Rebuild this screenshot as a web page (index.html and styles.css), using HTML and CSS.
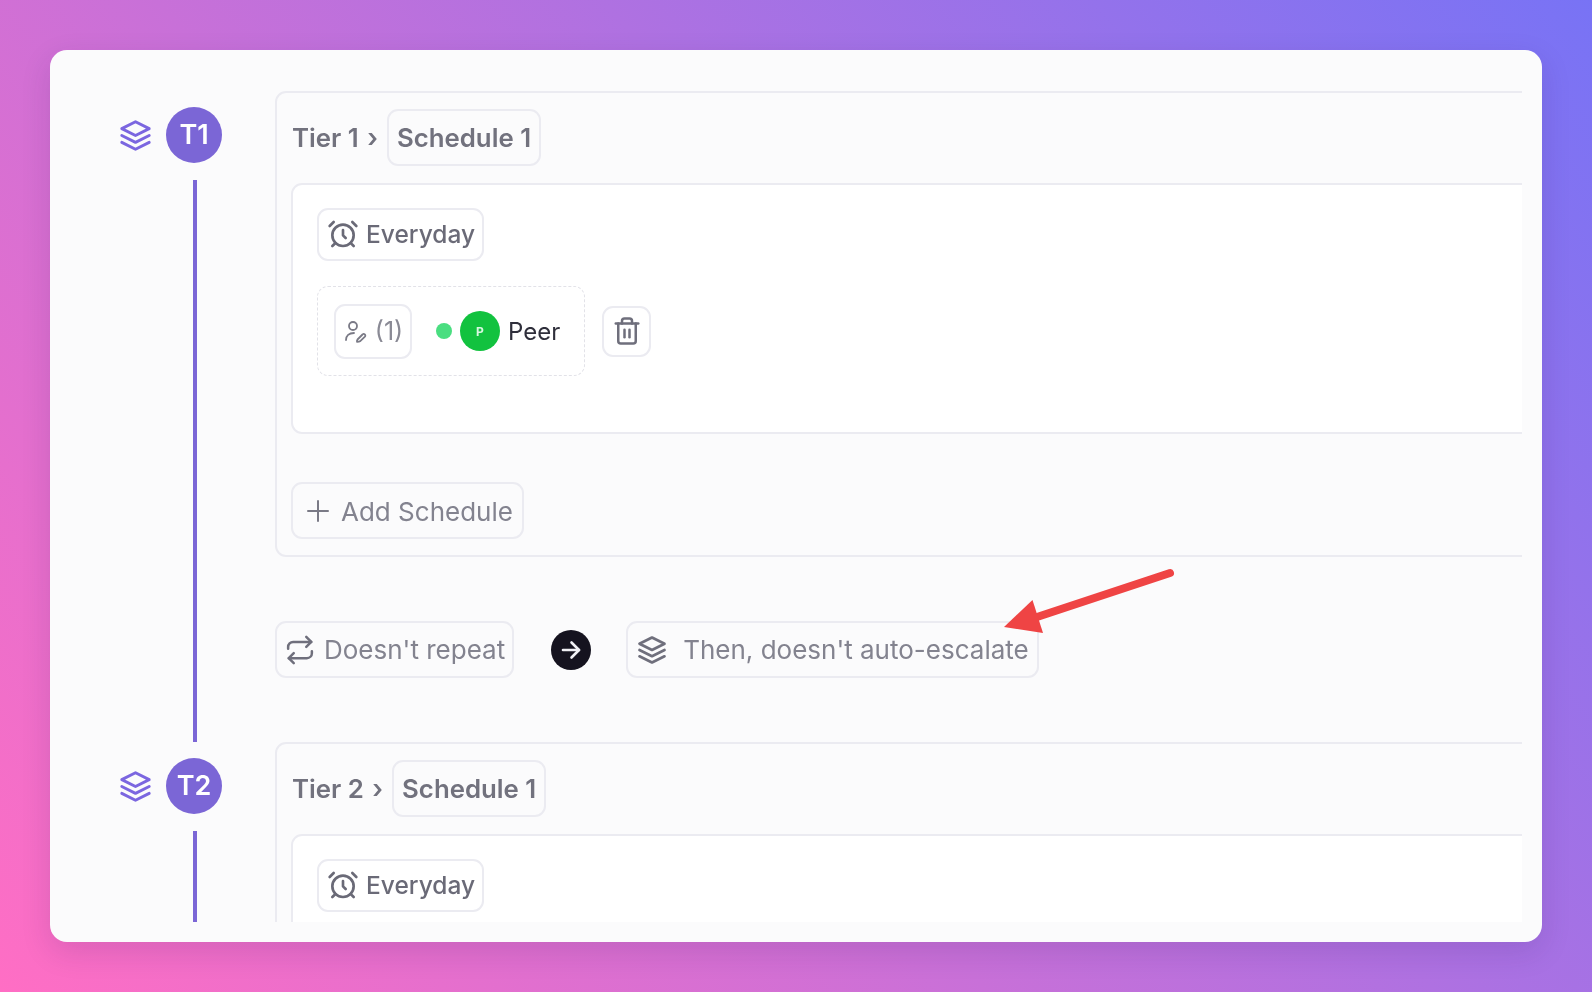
FILE: index.html
```html
<!DOCTYPE html>
<html lang="en">
<head>
<meta charset="utf-8">
<title>Escalation policy</title>
<link rel="stylesheet" href="styles.css">
</head>
<body>
<svg class="defs" width="0" height="0" aria-hidden="true">
  <symbol id="i-layers" viewBox="0 0 24 24"><path d="M12 2.600 2.600 7.300 12 12l9.400-4.700z"/><path d="M2.600 12 12 16.700l9.400-4.700"/><path d="M2.600 16.700 12 21.400l9.400-4.700"/></symbol>
  <symbol id="i-alarm" viewBox="0 0 24 24"><circle cx="12" cy="13" r="8"/><path d="M12 9v4l2 2"/><path d="M5 3 2 6"/><path d="m22 6-3-3"/><path d="M6.380 18.700 4 21"/><path d="M17.640 18.670 20 21"/></symbol>
  <symbol id="i-userpen" viewBox="0 0 24 24"><circle cx="10" cy="7" r="4"/><path d="M3 21c0-4 3-7 8-7"/><path d="m14.500 20.500 5-5a1.600 1.600 0 0 1 2.400 2.200l-4.900 4.600c-.8.500-3 .6-3 .6s-.2-1.600.5-2.400z"/></symbol>
  <symbol id="i-trash" viewBox="0 0 24 24"><path d="M3 6h18"/><path d="M5 6v14a2 2 0 0 0 2 2h10a2 2 0 0 0 2-2V6"/><path d="M8 6V4a2 2 0 0 1 2-2h4a2 2 0 0 1 2 2v2"/><path d="M10 11v6"/><path d="M14 11v6"/></symbol>
  <symbol id="i-plus" viewBox="0 0 24 24"><path d="M12 2v20"/><path d="M2 12h20"/></symbol>
  <symbol id="i-repeat" viewBox="0 0 24 24"><path d="m17 1.500 4 4-4 4"/><path d="M2.500 11v-1.500a4 4 0 0 1 4-4H21"/><path d="m7 22.500-4-4 4-4"/><path d="M21.500 13v1.500a4 4 0 0 1-4 4H3"/></symbol>
  <symbol id="i-arrow" viewBox="0 0 24 24"><path d="M4 12h16"/><path d="m12.500 4.500 7.500 7.500-7.500 7.500"/></symbol>
</svg>

<main class="stage">
  <section class="panel">
    <div class="viewport">

      <article class="tier">
        <aside class="gutter">
          <div class="gutter-head">
            <svg class="icon layers-icon"><use href="#i-layers"/></svg>
            <span class="tier-badge">T1</span>
          </div>
          <span class="timeline"></span>
        </aside>
        <div class="tier-body">
          <div class="tier-card">
            <header class="tier-title">
              <span class="crumb">Tier 1 <span class="crumb-sep">›</span></span>
              <span class="chip chip-title">Schedule 1</span>
            </header>
            <div class="schedule">
              <span class="chip chip-when"><svg class="icon alarm-icon"><use href="#i-alarm"/></svg>Everyday</span>
              <div class="assignee-row">
                <div class="assignees">
                  <span class="chip chip-count"><svg class="icon user-icon"><use href="#i-userpen"/></svg>(1)</span>
                  <span class="status-dot"></span>
                  <span class="avatar">P</span>
                  <span class="person">Peer</span>
                </div>
                <span class="chip chip-trash"><svg class="icon trash-icon"><use href="#i-trash"/></svg></span>
              </div>
            </div>
            <span class="chip chip-add"><svg class="icon plus-icon"><use href="#i-plus"/></svg>Add Schedule</span>
          </div>
          <div class="repeat-row">
            <span class="chip chip-repeat"><svg class="icon repeat-icon"><use href="#i-repeat"/></svg>Doesn't repeat</span>
            <span class="next-dot"><svg class="icon arrow-icon"><use href="#i-arrow"/></svg></span>
            <span class="chip chip-escalate"><svg class="icon escalate-icon"><use href="#i-layers"/></svg>Then, doesn't auto-escalate</span>
            <svg class="callout" viewBox="0 0 180 70" aria-hidden="true">
              <path class="callout-shaft" d="M166 4 30 49"/>
              <path class="callout-head" d="M0 58 28.500 31 39 64z"/>
            </svg>
          </div>
        </div>
      </article>

      <article class="tier">
        <aside class="gutter">
          <div class="gutter-head">
            <svg class="icon layers-icon"><use href="#i-layers"/></svg>
            <span class="tier-badge">T2</span>
          </div>
          <span class="timeline"></span>
        </aside>
        <div class="tier-body">
          <div class="tier-card">
            <header class="tier-title">
              <span class="crumb">Tier 2 <span class="crumb-sep">›</span></span>
              <span class="chip chip-title">Schedule 1</span>
            </header>
            <div class="schedule">
              <span class="chip chip-when"><svg class="icon alarm-icon"><use href="#i-alarm"/></svg>Everyday</span>
            </div>
          </div>
        </div>
      </article>

    </div>
  </section>
</main>
</body>
</html>
```
FILE: styles.css
```css
* { box-sizing: border-box; }

html, body { margin: 0; height: 100%; }

body {
  font-family: "Inter", "Liberation Sans", sans-serif;
  color: #6f6f7c;
  overflow: hidden;
}

.defs { position: absolute; }

.stage {
  width: 1592px;
  height: 992px;
  padding: 50px;
  background: linear-gradient(50deg, #ff6ec4 0%, #7873f5 100%);
}

.panel {
  height: 892px;
  padding: 20px;
  background: #fbfbfc;
  border-radius: 17px;
  box-shadow: 0 10px 30px rgba(40, 20, 90, 0.14);
}

.viewport {
  height: 852px;
  padding-top: 21px;
  overflow: hidden;
  filter: blur(0.5px);
}

.tier { display: flex; }

.gutter {
  flex: none;
  width: 205px;
  display: flex;
  flex-direction: column;
  padding-top: 16px;
}

.gutter-head {
  display: flex;
  align-items: center;
  gap: 13px;
  padding-left: 48px;
}

.tier-badge {
  width: 56px;
  height: 56px;
  padding-bottom: 1px;
  border-radius: 50%;
  background: #7b66d6;
  color: #fff;
  font-size: 27px;
  font-weight: 600;
  display: flex;
  align-items: center;
  justify-content: center;
}

.timeline {
  flex: 1;
  width: 4px;
  margin: 17px 0 0 122.500px;
  background: #7b66d6;
}

.tier-body { flex: none; width: 1400px; }

.tier-card {
  border: 2px solid #ebebf1;
  border-radius: 11px;
  padding: 16px 14px;
}

.tier-title {
  display: flex;
  align-items: center;
  gap: 9px;
  height: 57px;
  margin-bottom: 17px;
}

.crumb {
  margin: 0 0 1px 1px;
  font-size: 25.800px;
  font-weight: 600;
  color: #72727e;
}

.crumb-sep { margin-left: 2px; }

.chip {
  display: inline-flex;
  align-items: center;
  border: 2px solid #ebebf1;
  border-radius: 11px;
  background: #fbfbfc;
  font-size: 26px;
  white-space: nowrap;
}

.icon {
  flex: none;
  fill: none;
  stroke: currentColor;
  stroke-width: 2;
  stroke-linecap: round;
  stroke-linejoin: round;
}

.chip-title {
  height: 57px;
  padding: 0 8px 1px;
  font-size: 25.800px;
  font-weight: 600;
  color: #72727e;
}

.schedule {
  height: 251px;
  margin-bottom: 48px;
  padding: 23px 24px;
  border: 2px solid #ebebf1;
  border-radius: 11px;
  background: #fff;
}

.chip-when {
  height: 53px;
  gap: 7px;
  padding: 0 7px 1px 8px;
  background: #fff;
  font-size: 24.500px;
  font-weight: 500;
  color: #6a6a77;
}

.alarm-icon { width: 32px; height: 32px; }

.assignee-row {
  display: flex;
  align-items: center;
  gap: 17px;
  margin-top: 25px;
}

.assignees {
  display: flex;
  align-items: center;
  height: 90px;
  padding: 0 24px 0 16px;
  border: 1.500px dashed #e2e2e8;
  border-radius: 11px;
}

.chip-count {
  width: 78px;
  height: 55px;
  gap: 8px;
  justify-content: center;
  background: #fff;
  font-size: 25px;
  color: #8a8a95;
  margin-right: 24px;
}

.user-icon { width: 24px; height: 24px; color: #7a7a86; stroke-width: 1.800; }

.status-dot {
  width: 16px;
  height: 16px;
  border-radius: 50%;
  background: #4ade80;
  margin-right: 8px;
}

.avatar {
  width: 40px;
  height: 40px;
  border-radius: 50%;
  background: #12c23f;
  color: #d9f7e1;
  font-size: 12px;
  font-weight: 700;
  display: flex;
  align-items: center;
  justify-content: center;
  margin-right: 8px;
}

.person { font-size: 24px; font-weight: 400; color: #2f2f3b; }

.chip-trash {
  width: 49px;
  height: 51px;
  justify-content: center;
  background: #fff;
}

.trash-icon { width: 30px; height: 30px; color: #6f6f7c; }

.chip-add {
  height: 57px;
  gap: 11px;
  padding: 1px 9px 0 13px;
  color: #83838f;
}

.plus-icon { width: 24px; height: 24px; color: #7a7a86; }

.repeat-row {
  position: relative;
  display: flex;
  align-items: center;
  margin: 64px 0;
}

.chip-repeat {
  height: 57px;
  gap: 9px;
  padding: 0 7px 0 8px;
  color: #83838f;
}

.repeat-icon { width: 30px; height: 30px; color: #6f6f7c; }

.next-dot {
  width: 40px;
  height: 40px;
  margin: 0 35px 0 37px;
  border-radius: 50%;
  background: #15131f;
  color: #f0f0f4;
  display: flex;
  align-items: center;
  justify-content: center;
}

.arrow-icon { width: 24px; height: 24px; stroke-width: 2.600; }

.chip-escalate {
  height: 57px;
  gap: 15px;
  padding: 0 8px;
  color: #83838f;
}

.escalate-icon { width: 32px; height: 32px; color: #6f6f7c; }

.layers-icon { width: 35px; height: 35px; color: #7b66e0; }

.callout {
  position: absolute;
  left: 729px;
  top: -52px;
  width: 180px;
  height: 70px;
  overflow: visible;
}

.callout-shaft { fill: none; stroke: #ef4444; stroke-width: 8; stroke-linecap: round; }

.callout-head { fill: #ef4444; }
```
